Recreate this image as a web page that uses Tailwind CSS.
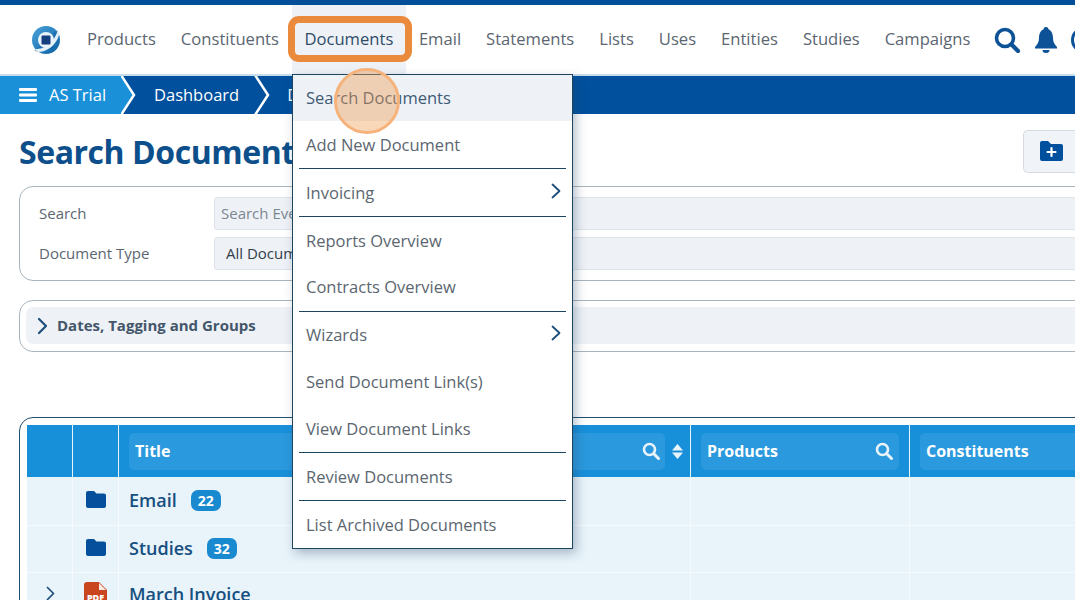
<!DOCTYPE html>
<html>
<head>
<meta charset="utf-8">
<script src="https://cdn.jsdelivr.net/npm/@tailwindcss/browser@4"></script>
</head>
<body class="relative w-[1075px] h-[600px] overflow-hidden bg-white font-['Open_Sans',sans-serif]">
<div class="h-[5px] bg-[#004f98]"></div>
<header class="h-[69px] flex items-center pl-[32px] bg-white text-[16.600px] text-[#5b6670] whitespace-nowrap">
  <svg class="w-[28px] h-[28px] shrink-0" viewBox="0 0 28 28"><defs><linearGradient id="g" x1="0" y1="0" x2="1" y2="1"><stop offset="0" stop-color="#4aa3dc"/><stop offset="1" stop-color="#0b5fa0"/></linearGradient></defs><circle cx="14" cy="14" r="14" fill="url(#g)"/><path d="M2 24C7 22 12 17 14 14 17 11 22 6 26 4 27 8 24 12 21 14 24 18 22 22 20 24 17 19 11 22 6 26 4 26 3 25 2 24Z" fill="#0f5c96" opacity=".35"/><path d="M3 23C9 23 20 22 26 4L27 9C24 20 14 26 6 26Z" fill="#e4f1f9"/><circle cx="14" cy="14" r="8" fill="#e8f3fa"/><rect x="9.500" y="9.500" width="9" height="9" rx="1" fill="#163f80"/></svg>
  <nav class="flex items-center h-full ml-[27px]">
    <a class="mr-[25px]">Products</a>
    <a class="mr-[13px]">Constituents</a>
    <a class="h-full w-[114px] flex items-center justify-center bg-[#eef2f7] text-[#2f4c68] mr-[13px]">Documents</a>
    <a class="mr-[25px]">Email</a>
    <a class="mr-[25px]">Statements</a>
    <a class="mr-[25px]">Lists</a>
    <a class="mr-[25px]">Uses</a>
    <a class="mr-[25px]">Entities</a>
    <a class="mr-[25px]">Studies</a>
    <a class="mr-[24px]">Campaigns</a>
    <svg class="w-[26px] h-[26px] shrink-0 mr-[15px]" viewBox="0 0 26 26" fill="none" stroke="#0d5296"><circle cx="11" cy="11" r="8.500" stroke-width="3.600"/><path d="M17.500 17.500L24 24" stroke-width="4.200" stroke-linecap="round"/></svg>
    <svg class="w-[22px] h-[26px] shrink-0 mr-[14px]" viewBox="0 0 22 26" fill="#0d5296"><circle cx="11" cy="2.500" r="2.500"/><path d="M11 2C5.500 2 4 7 4 11c0 4-1.500 6-4 9v1.500h22V20c-2.500-3-4-5-4-9 0-4-1.500-9-7-9Z"/><path d="M7.500 23h7a3.500 3 0 0 1-7 0Z"/></svg>
    <span class="w-[26px] h-[26px] rounded-full border-[3.500px] border-[#0d5296] shrink-0"></span>
  </nav>
</header>
<div class="h-[2px] bg-[#c9dcec]"></div>
<div class="h-[38px] flex items-center bg-[#00509d] text-white text-[16.500px] whitespace-nowrap">
  <div class="w-[121px] h-full flex items-center pl-[19px] bg-[#1a90d9]">
    <svg class="w-[18px] h-[16px] shrink-0" viewBox="0 0 18 16" fill="#fff"><rect y="1" width="18" height="3" rx="1"/><rect y="6.500" width="18" height="3" rx="1"/><rect y="12" width="18" height="3" rx="1"/></svg>
    <span class="ml-[12px]">AS Trial</span>
  </div>
  <svg class="w-[16px] h-[38px] shrink-0" viewBox="0 0 16 38"><path d="M0 0L13 19 0 38Z" fill="#1a90d9"/><path d="M0 -1L13 19 0 39" fill="none" stroke="#fff" stroke-width="2.500"/></svg>
  <span class="ml-[17px]">Dashboard</span>
  <svg class="w-[16px] h-[38px] shrink-0 ml-[15px]" viewBox="0 0 16 38"><path d="M1 -1L14 19 1 39" fill="none" stroke="#fff" stroke-width="2.500"/></svg>
  <span class="ml-[17px]">Documents</span>
</div>

<main class="pl-[19px]">
  <div class="h-[72px] flex items-center justify-between">
    <h1 class="text-[32px] font-bold tracking-[-0.45px] text-[#0d4f8b] leading-none whitespace-nowrap mt-[3px]">Search Documents</h1>
    <div class="w-[52px] h-[43px] mt-[2px] flex items-center pl-[16px] bg-[#f0f3f7] border border-[#d5dbe0] border-r-0 rounded-l-[5px] shrink-0">
      <svg class="w-[23px] h-[20px]" viewBox="0 0 23 20"><path d="M2 0h6l3 3h10a2 2 0 0 1 2 2v13a2 2 0 0 1-2 2H2a2 2 0 0 1-2-2V2a2 2 0 0 1 2-2Z" fill="#00509d"/><path d="M11.500 7v8M7.500 11h8" stroke="#fff" stroke-width="2.200" stroke-linecap="round"/></svg>
    </div>
  </div>

  <section class="h-[95px] w-[1100px] border border-[#a9b5bd] rounded-[14px] pl-[19px] pt-[10px] text-[15px] text-[#5b6670]">
    <div class="flex items-center h-[33px]">
      <label class="w-[175px]">Search</label>
      <div class="w-[880px] h-[33px] flex items-center pl-[6px] bg-[#eef2f7] border border-[#dde3e8] rounded-[3px] text-[#7b8790]">Search Everything</div>
    </div>
    <div class="flex items-center h-[33px] mt-[7px]">
      <label class="w-[175px]">Document Type</label>
      <div class="w-[880px] h-[33px] flex items-center pl-[11px] bg-[#eef2f7] border border-[#dde3e8] rounded-[3px] text-[#33404a]">All Documents</div>
    </div>
  </section>

  <section class="h-[52px] w-[1100px] mt-[19px] border border-[#a9b5bd] rounded-[14px] pl-[6px] pt-[6px]">
    <div class="h-[37px] flex items-center pl-[11px] bg-[#eef2f7] rounded-[7px] text-[15px] font-bold text-[#44566a]">
      <svg class="w-[11px] h-[18px] shrink-0" viewBox="0 0 11 18" fill="none" stroke="#1d4e7a" stroke-width="2.200" stroke-linecap="round" stroke-linejoin="round"><path d="M2 2l7 7-7 7"/></svg>
      <span class="ml-[9px]">Dates, Tagging and Groups</span>
    </div>
  </section>

  <section class="w-[1100px] h-[200px] mt-[65px] border border-[#1f4e6e] rounded-[14px] pl-[7px] pt-[7px]">
    <div class="grid grid-cols-[46px_46px_572px_219px_1fr] h-[52px] bg-[#1890d9] text-white text-[16px] font-bold">
      <div class="border-r border-[#e8f3fa]"></div>
      <div class="border-r border-[#e8f3fa]"></div>
      <div class="border-r border-[#e8f3fa] flex items-center pl-[10px] pr-[6px]">
        <div class="w-[536px] h-[37px] flex items-center justify-between pl-[6px] pr-[5px] bg-[#2a99dd] rounded-[5px]">
          <span>Title</span>
          <svg class="w-[18px] h-[18px]" viewBox="0 0 18 18" fill="none" stroke="#e8f3fa"><circle cx="7.500" cy="7.500" r="5.500" stroke-width="2.600"/><path d="M12 12l4.500 4.500" stroke-width="3" stroke-linecap="round"/></svg>
        </div>
        <svg class="w-[11px] h-[15px] ml-[7px] shrink-0" viewBox="0 0 11 15" fill="#e8f3fa"><path d="M5.500 0L11 6.500H0Z"/><path d="M5.500 15L11 8.500H0Z"/></svg>
      </div>
      <div class="border-r border-[#e8f3fa] flex items-center pl-[10px] pr-[10px]">
        <div class="w-full h-[37px] flex items-center justify-between pl-[6px] pr-[6px] bg-[#2a99dd] rounded-[5px]">
          <span>Products</span>
          <svg class="w-[18px] h-[18px]" viewBox="0 0 18 18" fill="none" stroke="#e8f3fa"><circle cx="7.500" cy="7.500" r="5.500" stroke-width="2.600"/><path d="M12 12l4.500 4.500" stroke-width="3" stroke-linecap="round"/></svg>
        </div>
      </div>
      <div class="flex items-center pl-[10px]">
        <div class="w-full h-[37px] flex items-center pl-[6px] bg-[#2a99dd] rounded-[5px]">Constituents</div>
      </div>
    </div>
    <div class="grid grid-cols-[46px_46px_572px_219px_1fr] h-[49px] bg-[#e8f3fa] border-b border-[#f6fafd] text-[#164f80] text-[18px] font-semibold">
      <div class="border-r border-[#f6fafd]"></div>
      <div class="border-r border-[#f6fafd] flex items-center justify-center pb-[4px]">
        <svg class="w-[20px] h-[17px]" viewBox="0 0 20 17" fill="#064f9c"><path d="M2 0h6l2.500 2.500H18a2 2 0 0 1 2 2V15a2 2 0 0 1-2 2H2a2 2 0 0 1-2-2V2a2 2 0 0 1 2-2Z"/></svg>
      </div>
      <div class="border-r border-[#f6fafd] flex items-center pl-[10px] pb-[1px]">
        <span>Email</span>
        <span class="ml-[14px] w-[30px] h-[21px] flex items-center justify-center rounded-[7px] bg-[#1a8ad0] text-white text-[14px] font-bold">22</span>
      </div>
      <div class="border-r border-[#f6fafd]"></div>
      <div></div>
    </div>
    <div class="grid grid-cols-[46px_46px_572px_219px_1fr] h-[47px] bg-[#e8f3fa] border-b border-[#f6fafd] text-[#164f80] text-[18px] font-semibold">
      <div class="border-r border-[#f6fafd]"></div>
      <div class="border-r border-[#f6fafd] flex items-center justify-center pb-[4px]">
        <svg class="w-[20px] h-[17px]" viewBox="0 0 20 17" fill="#064f9c"><path d="M2 0h6l2.500 2.500H18a2 2 0 0 1 2 2V15a2 2 0 0 1-2 2H2a2 2 0 0 1-2-2V2a2 2 0 0 1 2-2Z"/></svg>
      </div>
      <div class="border-r border-[#f6fafd] flex items-center pl-[10px] pb-[1px]">
        <span>Studies</span>
        <span class="ml-[14px] w-[30px] h-[21px] flex items-center justify-center rounded-[7px] bg-[#1a8ad0] text-white text-[14px] font-bold">32</span>
      </div>
      <div class="border-r border-[#f6fafd]"></div>
      <div></div>
    </div>
    <div class="grid grid-cols-[46px_46px_572px_219px_1fr] h-[48px] bg-[#e8f3fa] text-[#164f80] text-[18px] font-semibold">
      <div class="border-r border-[#f6fafd] flex justify-center pt-[13px] pl-[2px]">
        <svg class="w-[9px] h-[15px]" viewBox="0 0 9 15" fill="none" stroke="#1d4e7a" stroke-width="1.700" stroke-linecap="round" stroke-linejoin="round"><path d="M1.500 1.500l6 6-6 6"/></svg>
      </div>
      <div class="border-r border-[#f6fafd] flex justify-center pt-[9px]">
        <svg class="w-[23px] h-[30px]" viewBox="0 0 23 30"><path d="M3 0h12l8 8v19a3 3 0 0 1-3 3H3a3 3 0 0 1-3-3V3a3 3 0 0 1 3-3Z" fill="#c8451f"/><path d="M15 1l7 7h-7Z" fill="#fbe9e2"/><text x="11.500" y="19" text-anchor="middle" font-size="9" font-weight="800" fill="#fff" font-family="Open Sans">PDF</text></svg>
      </div>
      <div class="border-r border-[#f6fafd] pl-[10px] pt-[8px] whitespace-nowrap">March Invoice</div>
      <div class="border-r border-[#f6fafd]"></div>
      <div></div>
    </div>
  </section>
</main>

<!-- dropdown menu -->
<div class="absolute left-[292px] top-[74px] w-[281px] h-[475px] bg-white border border-[#1e4560] shadow-[3px_4px_10px_rgba(40,70,100,0.35)] text-[16.500px] text-[#5b6670] whitespace-nowrap">
  <a class="h-[46px] flex items-center pl-[13px] bg-[#eef2f7] text-[#3f5a75]">Search Documents</a>
  <a class="h-[47px] flex items-center pl-[13px] pt-[2px]">Add New Document</a>
  <div class="h-px mx-[6px] bg-[#1e4560]"></div>
  <a class="h-[47px] flex items-center justify-between pl-[13px] pr-[11px] pt-[2px]"><span>Invoicing</span>
    <svg class="w-[10px] h-[16px] -mt-[6px]" viewBox="0 0 10 16" fill="none" stroke="#1d4e7a" stroke-width="1.800" stroke-linecap="round" stroke-linejoin="round"><path d="M1.500 1.500l7 6.500-7 6.500"/></svg></a>
  <div class="h-px mx-[6px] bg-[#1e4560]"></div>
  <a class="h-[47px] flex items-center pl-[13px] pt-[2px]">Reports Overview</a>
  <a class="h-[47px] flex items-center pl-[13px]">Contracts Overview</a>
  <div class="h-px mx-[6px] bg-[#1e4560]"></div>
  <a class="h-[47px] flex items-center justify-between pl-[13px] pr-[11px]"><span>Wizards</span>
    <svg class="w-[10px] h-[16px] -mt-[6px]" viewBox="0 0 10 16" fill="none" stroke="#1d4e7a" stroke-width="1.800" stroke-linecap="round" stroke-linejoin="round"><path d="M1.500 1.500l7 6.500-7 6.500"/></svg></a>
  <a class="h-[47px] flex items-center pl-[13px]">Send Document Link(s)</a>
  <a class="h-[46px] flex items-center pl-[13px]">View Document Links</a>
  <div class="h-px mx-[6px] bg-[#1e4560]"></div>
  <a class="h-[47px] flex items-center pl-[13px] pt-[2px]">Review Documents</a>
  <div class="h-px mx-[6px] bg-[#1e4560]"></div>
  <a class="h-[47px] flex items-center pl-[13px] pt-[2px]">List Archived Documents</a>
</div>

<!-- tutorial highlight -->
<div class="absolute left-[288px] top-[16px] w-[124px] h-[46px] border-[7px] border-[#ea8a3c] rounded-[11px]"></div>
<div class="absolute left-[334px] top-[68px] w-[66px] h-[66px] rounded-full bg-[#f09a4f]/40 border-[3px] border-[#f5b27a]"></div>
</body>
</html>
